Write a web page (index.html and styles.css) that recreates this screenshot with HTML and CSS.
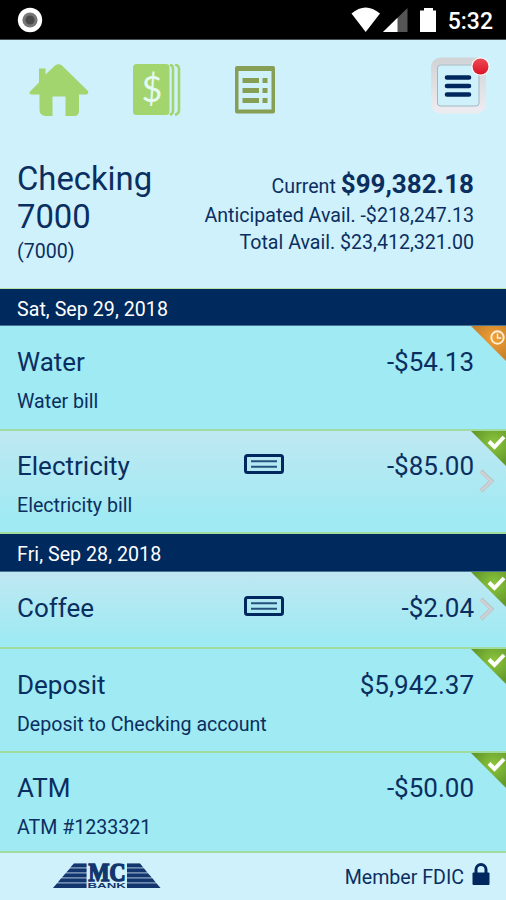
FILE: index.html
```html
<!DOCTYPE html>
<html lang="en">
<head>
    <meta charset="UTF-8">
    <meta name="viewport" content="width=device-width, initial-scale=1.0">
    <title>Checking 7000</title>
    <link rel="stylesheet" href="styles.css">
</head>
<body>
    <!-- shared icons -->
    <svg class="defs" width="0" height="0">
        <defs>
            <radialGradient id="green" cx="65%" cy="35%" r="60%">
                <stop offset="0" stop-color="#8cc63e"/>
                <stop offset="1" stop-color="#659a2b"/>
            </radialGradient>
            <radialGradient id="orange" cx="65%" cy="35%" r="60%">
                <stop offset="0" stop-color="#f2a035"/>
                <stop offset="1" stop-color="#c8812b"/>
            </radialGradient>
            <linearGradient id="frame" x1="0" y1="0" x2="0" y2="1">
                <stop offset="0" stop-color="#d2d4d7"/>
                <stop offset="1" stop-color="#ececf0"/>
            </linearGradient>
            <linearGradient id="red" x1="0" y1="0" x2="0" y2="1">
                <stop offset="0" stop-color="#ee4a55"/>
                <stop offset="1" stop-color="#dc1426"/>
            </linearGradient>
        </defs>
        <symbol id="cleared" viewBox="0 0 35 35">
            <path d="M0 0H35V35Z" fill="url(#green)"/>
            <path d="M18 10.500l5.500 5.500L33 6" fill="none" stroke="#fff" stroke-width="3.900"/>
        </symbol>
        <symbol id="pending" viewBox="0 0 35 35">
            <path d="M0 0H35V35Z" fill="url(#orange)"/>
            <circle cx="26.500" cy="11.500" r="6.200" fill="none" stroke="#fff0d8" stroke-width="1.900"/>
            <path d="M26.500 7.500v4.500h3.800" fill="none" stroke="#fff0d8" stroke-width="1.500"/>
        </symbol>
        <symbol id="check" viewBox="0 0 40 20">
            <rect x="1.500" y="1.500" width="37" height="17" rx="2" fill="none" stroke="#00285e" stroke-width="3"/>
            <path d="M7 7.300h26M7 12.700h26" stroke="#24517c" stroke-width="2"/>
        </symbol>
        <symbol id="chevron" viewBox="0 0 16 24">
            <path d="M2 2l10.500 10L2 22" fill="none" stroke="#b3bdc2" stroke-width="3.800"/>
            <path d="M2 2.500l10.300 9.700L2 22" fill="none" stroke="#d0cfd2" stroke-width="2.800"/>
        </symbol>
    </svg>

    <div class="status-bar">
        <svg width="26" height="26" viewBox="0 0 26 26">
            <circle cx="13" cy="13" r="12.200" fill="#fff"/>
            <circle cx="13" cy="13" r="7.600" fill="#777"/>
            <circle cx="13" cy="13" r="4.500" fill="#4a4a4a"/>
        </svg>
        <div class="status-right">
            <svg width="88" height="26" viewBox="0 0 88 26">
                <path d="M0.500 6.500Q14.500-5.500 29 6.500L14.700 25Z" fill="#fff"/>
                <path d="M32 25L56.500 1V25Z" fill="#555"/>
                <path d="M32 25L46.500 10.800V25Z" fill="#fff"/>
                <path d="M69 3.500h4V1h9v2.500h3V25H69Z" fill="#fff"/>
            </svg>
            <span class="time">5:32</span>
        </div>
    </div>

    <div class="toolbar">
        <svg class="home" width="60" height="54" viewBox="0 0 60 54">
            <path d="M10 4.500h6.500v6L26 1.500Q29.500-1 33 1.500L59 27Q60 30.500 57 30.500H50V47Q50 52 45 52H36.500V32.500H23.500V52H16Q10.500 51 10.500 46V30.500H2Q-.500 29 1 27.500L10 18.500Z" fill="#a3d56e"/>
        </svg>
        <svg class="accounts" width="48" height="52" viewBox="0 0 48 52">
            <rect width="36.500" height="51" rx="3.500" fill="#a3d56e"/>
            <path d="M37 .500q3 1 3 4v42q0 3-3 4.500M42 .500q4 1 4 4v42q0 3-4 4.500" fill="none" stroke="#a3d56e" stroke-width="2.600"/>
            <text x="19" y="38" text-anchor="middle" class="dollar">$</text>
        </svg>
        <svg class="register" width="40" height="48" viewBox="0 0 40 48">
            <path fill-rule="evenodd" d="M2 0H38a2 2 0 0 1 2 2V45.500a2 2 0 0 1-2 2H2a2 2 0 0 1-2-2V2A2 2 0 0 1 2 0ZM3.500 5V43.500H36.500V5Z" fill="#869f55"/>
            <path d="M7.500 14.500h16.500M7.500 24.500h16.500M7.500 34.500h16.500M27.500 14.500h5M27.500 24.500h5M27.500 34.500h5" stroke="#869f55" stroke-width="5"/>
        </svg>
        <svg class="menu" width="62" height="58" viewBox="0 0 62 58">
            <rect x="4.500" y="4" width="48" height="49" rx="6" fill="none" stroke="url(#frame)" stroke-width="7"/>
            <rect x="7.500" y="8" width="41.500" height="41" rx="3" fill="#cff1fb" stroke="#a9b5bb" stroke-width="1"/>
            <path d="M17 20.500h22M17 29h22M17 37.500h22" stroke="#00285e" stroke-width="4.600" stroke-linecap="round"/>
            <circle cx="50.500" cy="9.500" r="9.300" fill="#fff" opacity=".8"/>
            <circle cx="50.500" cy="9.500" r="8" fill="url(#red)"/>
        </svg>
    </div>

    <div class="account">
        <div class="account-name">
            <h1>Checking<br>7000</h1>
            <p>(7000)</p>
        </div>
        <div class="balances">
            <p class="current">Current <b>$99,382.18</b></p>
            <p class="anticipated">Anticipated Avail. -$218,247.13</p>
            <p class="total">Total Avail. $23,412,321.00</p>
        </div>
    </div>

    <div class="date">Sat, Sep 29, 2018</div>
    <div class="row water">
        <div class="title">Water</div>
        <div class="amount">-$54.13</div>
        <div class="memo">Water bill</div>
        <svg class="corner"><use href="#pending"/></svg>
    </div>
    <div class="row linked electricity">
        <div class="title">Electricity</div>
        <svg class="check"><use href="#check"/></svg>
        <div class="amount">-$85.00</div>
        <div class="memo">Electricity bill</div>
        <svg class="chevron"><use href="#chevron"/></svg>
        <svg class="corner"><use href="#cleared"/></svg>
    </div>
    <div class="date second">Fri, Sep 28, 2018</div>
    <div class="row linked coffee">
        <div class="title">Coffee</div>
        <svg class="check"><use href="#check"/></svg>
        <div class="amount">-$2.04</div>
        <svg class="chevron"><use href="#chevron"/></svg>
        <svg class="corner"><use href="#cleared"/></svg>
    </div>
    <div class="row deposit">
        <div class="title">Deposit</div>
        <div class="amount">$5,942.37</div>
        <div class="memo">Deposit to Checking account</div>
        <svg class="corner"><use href="#cleared"/></svg>
    </div>
    <div class="row atm">
        <div class="title">ATM</div>
        <div class="amount">-$50.00</div>
        <div class="memo">ATM #1233321</div>
        <svg class="corner"><use href="#cleared"/></svg>
    </div>

    <div class="footer">
        <svg class="logo" width="108" height="26" viewBox="0 0 108 26">
            <path d="M21 .500H33.500V25H0Z" fill="#8fa9c6"/>
            <path d="M87 .500H74V25H107.500Z" fill="#8fa9c6"/>
            <path d="M21 0.500H33.500V4.300H17.500ZM17 5.500H33.500V9.300H13.500ZM12.500 10.500H33.500V14.300H9.200ZM8 15.500H33.500V19.300H5ZM4 20.500H33.500V25H0Z" fill="#12366d"/>
            <path d="M87 0.500H74V4.300H90ZM91 5.500H74V9.300H94ZM95 10.500H74V14.300H98.500ZM99.500 15.500H74V19.300H102.500ZM103.500 20.500H74V25H107.500Z" fill="#12366d"/>
            <text x="35.500" y="18" textLength="37" lengthAdjust="spacingAndGlyphs" class="mc">MC</text>
            <text x="34.500" y="25" textLength="38.500" lengthAdjust="spacingAndGlyphs" class="bank">BANK</text>
        </svg>
        <div class="member">
            <span>Member FDIC</span>
            <svg width="18" height="23" viewBox="0 0 18 23">
                <path d="M4 11V6.500a5 5 0 0 1 10 0V11" fill="none" stroke="#00285e" stroke-width="3"/>
                <rect x=".500" y="9.500" width="17" height="12.500" rx="1" fill="#00285e"/>
            </svg>
        </div>
    </div>
</body>
</html>
```

FILE: styles.css
```css
* {
    box-sizing: border-box;
}
body {
    margin: 0;
    height: 900px;
    overflow: hidden;
    font-family: Roboto, sans-serif;
    font-size: 19.6px;
    color: #0b2e61;
    background-color: #cff1fb;
}
h1, p {
    margin: 0;
    font-weight: 400;
}
svg {
    display: block;
    flex: none;
}
.defs {
    width: 0;
    height: 0;
}
.status-bar {
    display: flex;
    justify-content: space-between;
    height: 40px;
    padding: 7px 13px 0 17px;
    background-color: #000;
    border-bottom: 1px solid #435056;
}
.status-right {
    display: flex;
    gap: 9px;
}
.time {
    color: #fff;
    font-size: 23px;
    font-weight: 500;
    line-height: 29px;
}
.toolbar {
    display: flex;
    align-items: flex-start;
    height: 118px;
    padding: 17px 0 0 29px;
}
.home {
    margin-top: 7px;
}
.accounts {
    margin: 7px 0 0 44px;
}
.register {
    margin: 9px 0 0 54px;
}
.menu {
    margin: 0 14px 0 auto;
}
.dollar {
    font-family: Lato, sans-serif;
    font-size: 36px;
    fill: #e4f9ef;
}
.account {
    display: flex;
    justify-content: space-between;
    height: 131px;
    padding: 2px 32px 0 17px;
    border-bottom: 1px solid #b9e2a8;
}
.account h1 {
    font-size: 32.8px;
    line-height: 38px;
}
.account-name p {
    line-height: 28px;
    margin-top: 2px;
}
.balances {
    padding-top: 8px;
    text-align: right;
}
.balances p {
    line-height: 27px;
}
.balances .current {
    line-height: 32px;
}
.balances .anticipated {
    margin-top: -1px;
}
.balances b {
    font-size: 26px;
    font-weight: 700;
}
.date {
    height: 37px;
    padding-left: 17px;
    line-height: 41px;
    letter-spacing: 0.05px;
    color: #fff;
    background-color: #00295d;
    border-bottom: 1px solid #46738f;
}
.second {
    height: 38px;
}
.row {
    position: relative;
    display: grid;
    grid-template-columns: 227px 40px 1fr 32px;
    grid-template-rows: 36px auto;
    align-content: start;
    height: 104px;
    padding: 18px 0 0 17px;
    background-color: #9feaf3;
    border-bottom: 2px solid #a0dca0;
}
.water {
    height: 105px;
}
.electricity {
    height: 103px;
    padding-top: 17px;
}
.coffee {
    height: 77px;
}
.atm {
    height: 100px;
    padding-top: 17px;
}
.linked {
    background: linear-gradient(#bfe8f2, #9feaf3 90%);
}
.title, .amount {
    font-size: 26px;
    line-height: 36px;
}
.amount {
    grid-column: 3;
    text-align: right;
}
.memo {
    grid-column: 1 / 4;
    grid-row: 2;
    margin-top: 8px;
    line-height: 28px;
}
.check {
    width: 40px;
    height: 20px;
    margin-top: 6px;
}
.chevron {
    grid-column: 4;
    grid-row: 1 / 3;
    width: 16px;
    height: 24px;
    margin: 21px 0 0 5px;
}
.coffee .chevron {
    margin-top: 7px;
}
.corner {
    position: absolute;
    top: 0;
    right: 0;
    width: 35px;
    height: 35px;
}
.footer {
    display: flex;
    justify-content: space-between;
    height: 47px;
    padding: 10px 16px 0 53px;
}
.logo {
    overflow: visible;
}
.mc {
    font: bold 25px "Liberation Serif", serif;
    fill: #12366d;
    stroke: #12366d;
    stroke-width: 1.6px;
}
.bank {
    font: bold 7px "Liberation Sans", sans-serif;
    fill: #12366d;
}
.member {
    display: flex;
    gap: 8px;
    line-height: 29px;
}
```
